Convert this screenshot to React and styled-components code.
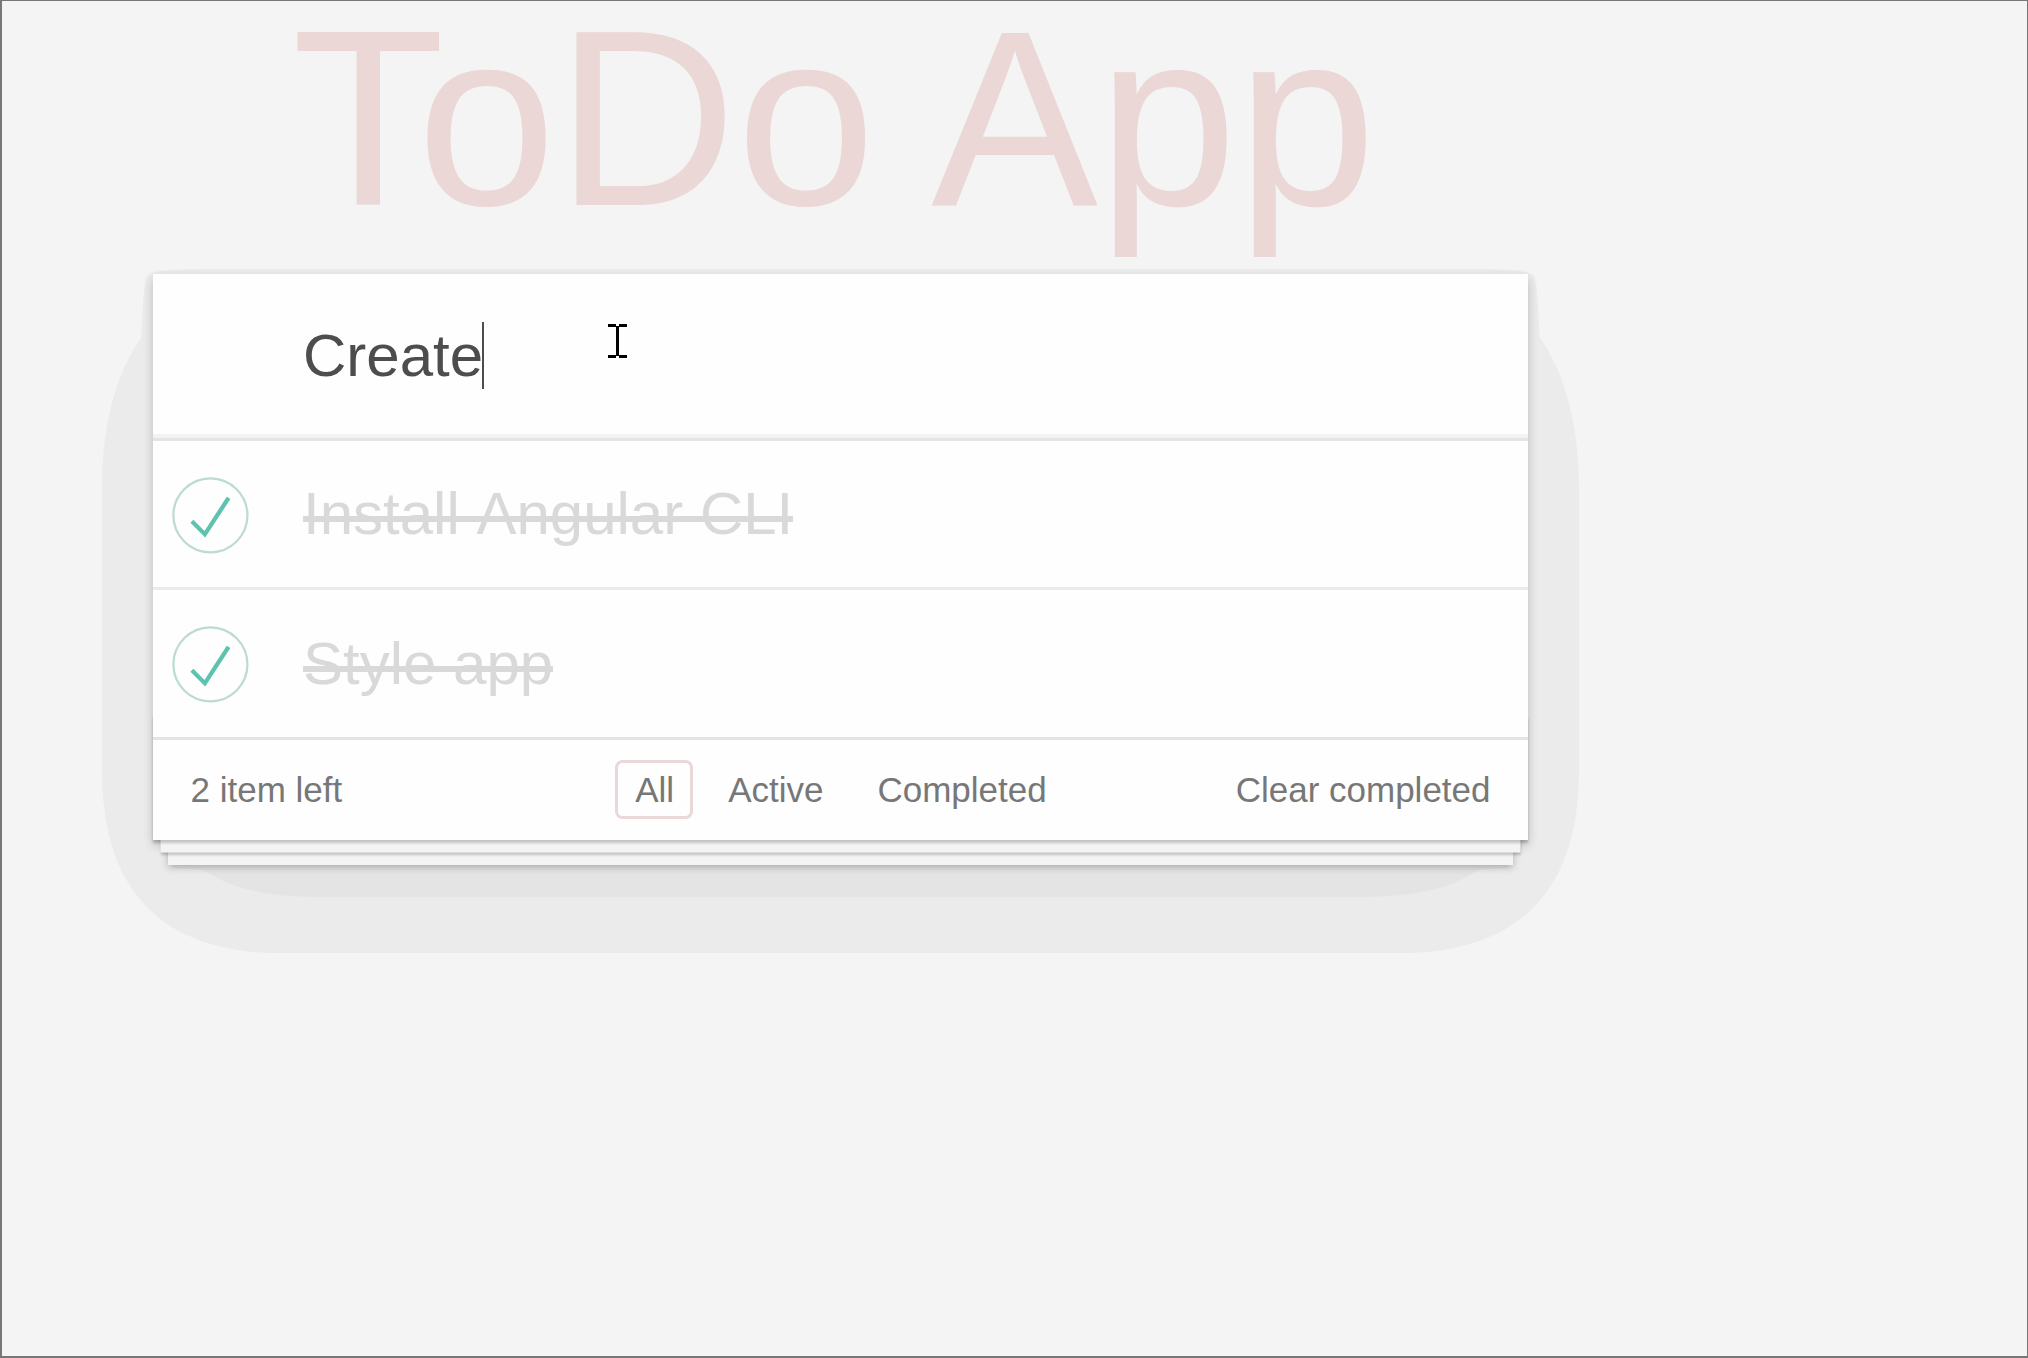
import React from 'react';
import styled, { createGlobalStyle } from 'styled-components';

const GlobalStyle = createGlobalStyle`
  * { box-sizing: border-box; }
  body { margin: 0; background: #f4f4f4; overflow: hidden; }
  button { font: inherit; color: inherit; background: none; border: 0; padding: 0; }
`;

const Page = styled.main`
  height: 1358px;
  padding-left: 151px;
  background: #f4f4f4;
  border: solid #777;
  border-width: 1px 1px 2px 2px;
  font-family: 'Liberation Sans', Arial, sans-serif;
  color: #4d4d4d;
`;

const Title = styled.h1`
  margin: 0;
  width: 1362px;
  height: 273px;
  padding-top: 4px;
  font-size: 250px;
  font-weight: 400;
  line-height: 228px;
  text-align: center;
  white-space: nowrap;
  color: #ead7d6;
`;

const Card = styled.section`
  position: relative;
  z-index: 0;
  width: 1375px;
  height: 566px;
  display: flex;
  flex-direction: column;
`;

const HaloSvg = styled.svg`
  position: absolute;
  z-index: -1;
  top: 0;
  left: 0;
  width: 1375px;
  height: 566px;
  overflow: visible;
`;

const CardShadow = styled.div`
  position: absolute;
  z-index: -1;
  inset: 0;
  box-shadow: 0 5px 10px rgba(0, 0, 0, 0.2);
`;

const Stack = styled.div`
  position: absolute;
  z-index: -1;
  left: 0;
  right: 0;
  bottom: 0;
  height: 125px;
  box-shadow:
    0 2.5px 2.5px rgba(0, 0, 0, 0.2),
    0 20px 0 -7.5px #f4f4f4,
    0 22.5px 2.5px -7.5px rgba(0, 0, 0, 0.2),
    0 40px 0 -15px #f4f4f4,
    0 42.5px 7px -15px rgba(0, 0, 0, 0.25);
`;

const Entry = styled.div`
  display: flex;
  align-items: center;
  height: 164px;
  padding: 2px 0 0 150px;
  background: #fefefe;
  border-bottom: 4px solid #f3f3f3;
  font-size: 60px;
  line-height: 67px;
`;

const Caret = styled.span`
  width: 2px;
  height: 67px;
  margin-left: -1px;
  background: #4d4d4d;
`;

const List = styled.ul`
  list-style: none;
  margin: 0;
  padding: 0;
  background: #fefefe;
  border-top: 3px solid #e4e4e4;
`;

const Item = styled.li`
  display: flex;
  align-items: center;
  height: ${p => (p.$last ? 147 : 149)}px;
  border-bottom: ${p => (p.$last ? '0' : '3px solid #ebebeb')};
`;

const Check = styled.svg`
  flex: none;
  width: 100px;
  height: 100px;
  margin: ${p => (p.$last ? 1 : 2)}px 50px 0 0;
`;

const Label = styled.span`
  position: relative;
  font-size: 60px;
  line-height: 72px;
  font-kerning: none;
  color: #d9d9d9;

  &::after {
    content: '';
    position: absolute;
    left: 0;
    right: 0;
    top: 38px;
    height: 6px;
    background: #d9d9d9;
  }
`;

const Footer = styled.footer`
  display: grid;
  grid-template-columns: 1fr auto 1fr;
  align-items: center;
  height: 103px;
  padding: 0 37.5px;
  background: #fefefe;
  border-top: 3px solid #e4e4e4;
  font-size: 35px;
  line-height: 40px;
  color: #777;
`;

const Filters = styled.nav`
  display: flex;
  gap: 16px;
  margin-top: -2px;
`;

const Filter = styled.button`
  height: 59px;
  padding: 2px 16px 0 ${p => (p.$active ? 17 : 16)}px;
  border: 3px solid ${p => (p.$active ? '#ead7d7' : 'transparent')};
  border-radius: 7.5px;
`;

const Clear = styled.button`
  justify-self: end;
`;

const Pointer = styled.svg`
  position: absolute;
  left: 455px;
  top: 50px;
  width: 19px;
  height: 34px;
`;

function HaloHalf({ transform }) {
  return (
    <g transform={transform}>
      <path
        fill="#ebebeb"
        d="M690-5H50C15-4-3-5-7 5-9 14-10 30-12 64-32 92-51 140-51 215V496C-51 605-3 673 114 679H690z"
      />
      <path fill="#e4e4e4" d="M690 560H10L20 594 50 596C75 612 100 621 160 623H690z" />
    </g>
  );
}

function Halo() {
  return (
    <HaloSvg viewBox="0 0 1375 566">
      <HaloHalf />
      <HaloHalf transform="translate(1375 0) scale(-1 1)" />
    </HaloSvg>
  );
}

function Tick({ last }) {
  return (
    <Check $last={last} viewBox="-10 -18 100 135" overflow="visible">
      <circle cx="50" cy="50" r="50" fill="none" stroke="#bddad5" strokeWidth="3" />
      <path fill="#5dc2af" d="M72 25L42 71 27 56l-4 4 20 20 34-52z" />
    </Check>
  );
}

const todos = ['Install Angular CLI', 'Style app'];

export default function App() {
  return (
    <>
      <GlobalStyle />
      <Page>
        <Title>ToDo App</Title>
        <Card>
          <Halo />
          <CardShadow />
          <Stack />
          <Entry>Create<Caret /></Entry>
          <List>
            {todos.map((todo, i) => {
              const last = i === todos.length - 1;
              return (
                <Item key={todo} $last={last}>
                  <Tick last={last} />
                  <Label>{todo}</Label>
                </Item>
              );
            })}
          </List>
          <Footer>
            <span>2 item left</span>
            <Filters>
              <Filter $active>All</Filter>
              <Filter>Active</Filter>
              <Filter>Completed</Filter>
            </Filters>
            <Clear>Clear completed</Clear>
          </Footer>
          <Pointer viewBox="0 0 19 34" shapeRendering="crispEdges">
            <path d="M0 0h8v3H0zM11 0h8v3h-8zM8 2h3v30H8zM0 31h8v3H0zM11 31h8v3h-8z" />
          </Pointer>
        </Card>
      </Page>
    </>
  );
}
